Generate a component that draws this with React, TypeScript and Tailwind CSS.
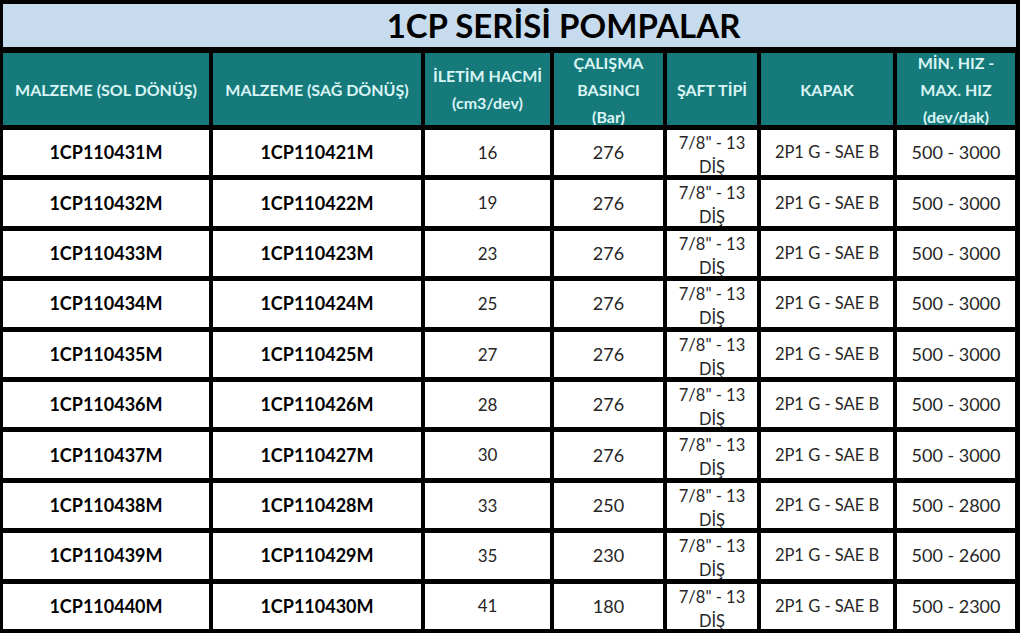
const rows = [
  ['1CP110431M', '1CP110421M', '16', '276', '500 - 3000'],
  ['1CP110432M', '1CP110422M', '19', '276', '500 - 3000'],
  ['1CP110433M', '1CP110423M', '23', '276', '500 - 3000'],
  ['1CP110434M', '1CP110424M', '25', '276', '500 - 3000'],
  ['1CP110435M', '1CP110425M', '27', '276', '500 - 3000'],
  ['1CP110436M', '1CP110426M', '28', '276', '500 - 3000'],
  ['1CP110437M', '1CP110427M', '30', '276', '500 - 3000'],
  ['1CP110438M', '1CP110428M', '33', '250', '500 - 2800'],
  ['1CP110439M', '1CP110429M', '35', '230', '500 - 2600'],
  ['1CP110440M', '1CP110430M', '41', '180', '500 - 2300'],
];

const headers: string[][] = [
  ['MALZEME (SOL DÖNÜŞ)'],
  ['MALZEME (SAĞ DÖNÜŞ)'],
  ['İLETİM HACMİ', '(cm3/dev)'],
  ['ÇALIŞMA', 'BASINCI', '(Bar)'],
  ['ŞAFT TİPİ'],
  ['KAPAK'],
  ['MİN. HIZ -', 'MAX. HIZ', '(dev/dak)'],
];

export default function App() {
  return (
    <div className="min-h-[633px] bg-white font-['Lato',sans-serif]">
      <div className="w-[1020px] bg-black pt-[4px] pl-[3px] pr-[4px] pb-[4px]">
        <div className="h-[43px] bg-[#c6dcee] flex items-center justify-center mb-[6px]">
          <h1 className="text-[33px] font-bold text-black leading-none pl-[108px]">1CP SERİSİ POMPALAR</h1>
        </div>
        <div className="grid grid-cols-[206px_208px_125px_109px_90px_132px_118px] grid-rows-[72px] auto-rows-[45.4px] gap-x-[4px] gap-y-[5px]">
          {headers.map((lines, i) => (
            <div
              key={i}
              className="bg-[#167a7b] text-[#d9f4f4] font-bold text-[16px] leading-[27px] flex flex-col items-center justify-center overflow-hidden text-center whitespace-nowrap"
            >
              {lines.map((l) => (
                <span key={l}>{l}</span>
              ))}
            </div>
          ))}
          {rows.map((r) => (
            <Row key={r[0]} r={r} />
          ))}
        </div>
      </div>
    </div>
  );
}

function Row({ r }: { r: string[] }) {
  const cell = 'bg-white flex items-center justify-center overflow-hidden whitespace-nowrap';
  return (
    <>
      <div className={`${cell} text-[18px] font-bold text-black`}>{r[0]}</div>
      <div className={`${cell} text-[18px] font-bold text-black`}>{r[1]}</div>
      <div className={`${cell} text-[17px] text-[#262626]`}>{r[2]}</div>
      <div className={`${cell} text-[18px] text-[#262626]`}>{r[3]}</div>
      <div className="bg-white overflow-hidden flex flex-col items-center pt-[1px] text-[16.5px] leading-[24px] text-[#262626] whitespace-nowrap">
        <span>7/8" - 13</span>
        <span>DİŞ</span>
      </div>
      <div className={`${cell} text-[16.5px] text-[#262626]`}>2P1 G - SAE B</div>
      <div className={`${cell} text-[18px] text-[#262626]`}>{r[4]}</div>
    </>
  );
}
